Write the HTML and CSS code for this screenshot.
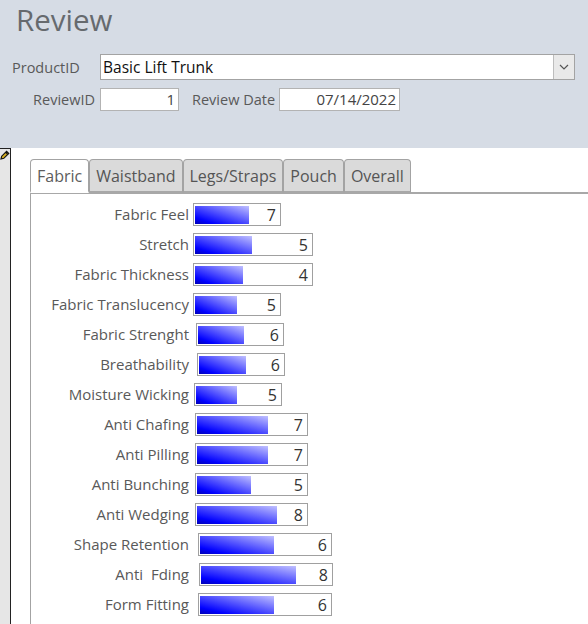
FILE: index.html
```html
<!DOCTYPE html>
<html>
<head>
<meta charset="utf-8">
<title>Review</title>
<link rel="stylesheet" href="styles.css">
</head>
<body>
<div class="form">
  <header class="hdr">
    <h1 class="title">Review</h1>
    <div class="line1">
      <span class="lbl lbl-pid">ProductID</span>
      <div class="combo">
        <span class="combo-text">Basic Lift Trunk</span>
        <span class="combo-btn"><svg width="10" height="6" viewBox="0 0 10 6"><path d="M1 1 L5 5 L9 1" fill="none" stroke="#555" stroke-width="1.2"/></svg></span>
      </div>
    </div>
    <div class="line2">
      <span class="lbl lbl-rid">ReviewID</span>
      <div class="tb tb-id">1</div>
      <span class="lbl lbl-date">Review Date</span>
      <div class="tb tb-date">07/14/2022</div>
    </div>
  </header>
  <div class="detail">
    <div class="selector">
      <svg class="pencil" width="10" height="10" viewBox="0 0 10 10"><path d="M1 9 L1.7 6.2 L6.6 1.3 L8.7 3.4 L3.8 8.3 Z" fill="#d8b020" stroke="#111" stroke-width="1.2"/><path d="M5.6 2.3 L7.7 4.4" stroke="#111" stroke-width="1.2"/></svg>
    </div>
    <div class="tabctl">
      <div class="tabs">
        <div class="tab active">Fabric</div>
        <div class="tab">Waistband</div>
        <div class="tab">Legs/Straps</div>
        <div class="tab">Pouch</div>
        <div class="tab">Overall</div>
      </div>
      <div class="page">
        <div class="row"><span class="rl">Fabric Feel</span><div class="box bx-s"><div class="fill" style="width:54px"></div><span class="val">7</span></div></div>
        <div class="row"><span class="rl">Stretch</span><div class="box bx-l"><div class="fill" style="width:57px"></div><span class="val">5</span></div></div>
        <div class="row"><span class="rl">Fabric Thickness</span><div class="box bx-l"><div class="fill" style="width:48px"></div><span class="val">4</span></div></div>
        <div class="row"><span class="rl">Fabric Translucency</span><div class="box bx-s"><div class="fill" style="width:42px"></div><span class="val">5</span></div></div>
        <div class="row"><span class="rl">Fabric Strenght</span><div class="box bx-s"><div class="fill" style="width:46px"></div><span class="val">6</span></div></div>
        <div class="row"><span class="rl">Breathability</span><div class="box bx-s"><div class="fill" style="width:47px"></div><span class="val">6</span></div></div>
        <div class="row"><span class="rl">Moisture Wicking</span><div class="box bx-s"><div class="fill" style="width:41px"></div><span class="val">5</span></div></div>
        <div class="row"><span class="rl">Anti Chafing</span><div class="box bx-m"><div class="fill" style="width:71px"></div><span class="val">7</span></div></div>
        <div class="row"><span class="rl">Anti Pilling</span><div class="box bx-m"><div class="fill" style="width:71px"></div><span class="val">7</span></div></div>
        <div class="row"><span class="rl">Anti Bunching</span><div class="box bx-m"><div class="fill" style="width:54px"></div><span class="val">5</span></div></div>
        <div class="row"><span class="rl">Anti Wedging</span><div class="box bx-m"><div class="fill" style="width:80px"></div><span class="val">8</span></div></div>
        <div class="row"><span class="rl">Shape Retention</span><div class="box bx-xl"><div class="fill" style="width:74px"></div><span class="val">6</span></div></div>
        <div class="row"><span class="rl">Anti&nbsp; Fding</span><div class="box bx-xl"><div class="fill" style="width:95px"></div><span class="val">8</span></div></div>
        <div class="row"><span class="rl">Form Fitting</span><div class="box bx-xl"><div class="fill" style="width:74px"></div><span class="val">6</span></div></div>
      </div>
    </div>
  </div>
</div>
</body>
</html>
```

FILE: styles.css
```css
* { box-sizing: border-box; }
html, body { margin: 0; padding: 0; }
body {
  width: 588px;
  height: 624px;
  overflow: hidden;
  background: #ffffff;
  font-family: "Open Sans", "Noto Sans", "Liberation Sans", sans-serif;
}
.form { display: flex; flex-direction: column; height: 624px; }

.hdr {
  height: 148px;
  background: #d6dce5;
  padding-top: 2px;
}
.title {
  margin: 0;
  padding-left: 16px;
  font-weight: 400;
  font-size: 29.5px;
  line-height: 36px;
  color: #666a6e;
}
.lbl { font-size: 14.5px; color: #595959; white-space: nowrap; }
.line1 {
  display: flex;
  align-items: center;
  margin-top: 16px;
  height: 26px;
  padding-left: 12px;
}
.lbl-pid { width: 88px; }
.combo {
  width: 475px;
  height: 26px;
  background: #fff;
  border: 1px solid #a3a3a3;
  display: flex;
  align-items: center;
}
.combo-text {
  flex: 1;
  padding-left: 2px;
  font-size: 15.5px;
  color: #111;
}
.combo-btn {
  width: 21px;
  height: 24px;
  background: #e9e9e9;
  border-left: 1px solid #bdbdbd;
  display: flex;
  align-items: center;
  justify-content: center;
}
.line2 {
  display: flex;
  align-items: center;
  margin-top: 8px;
  height: 23px;
}
.lbl-rid { width: 95px; text-align: right; }
.tb {
  height: 23px;
  background: #fff;
  border: 1px solid #b3b3b3;
  text-align: right;
  padding-right: 3px;
  font-size: 15px;
  line-height: 21px;
  color: #444;
}
.tb-id { width: 79px; margin-left: 5px; }
.lbl-date { margin-left: 13px; }
.tb-date { width: 121px; margin-left: 4px; }

.detail { flex: 1; display: flex; }
.selector {
  width: 11px;
  background: #e6e6e6;
  border-top: 1px solid #222;
  border-right: 1.5px solid #222;
  position: relative;
}
.pencil { position: absolute; left: 0; top: 1px; }

.tabctl { flex: 1; margin-left: 19px; display: flex; flex-direction: column; }
.tabs {
  display: flex;
  padding-top: 11px;
  border-bottom: 2px solid #a8a8a8;
  height: 46px;
}
.tab {
  height: 34px;
  margin-bottom: -2px;
  padding: 0 6px;
  font-size: 16px;
  line-height: 32px;
  color: #555;
  background: #dadada;
  border: 1px solid #a3a3a3;
  border-bottom: 2px solid #a8a8a8;
  border-radius: 4px 4px 0 0;
}
.tab.active {
  background: #fff;
  color: #5c5c5c;
  border-bottom: 2px solid #fff;
}
.page {
  flex: 1;
  border-left: 1px solid #a3a3a3;
  padding-top: 5px;
}
.row {
  display: flex;
  align-items: center;
  height: 30px;
}
.rl {
  width: 158px;
  text-align: right;
  font-size: 15px;
  color: #595959;
  white-space: nowrap;
}
.box {
  height: 23px;
  border: 1px solid #a0a0a0;
  background: #fff;
  padding: 2px 1px 1px 1px;
  display: flex;
  align-items: stretch;
}
.bx-s { width: 88px; }
.bx-l { width: 120px; }
.bx-m { width: 113px; }
.bx-xl { width: 134px; }
.fill {
  background: linear-gradient(to top right, #0000b4 0%, #0000ff 18%, #c0c0ff 100%);
}
.val {
  margin-left: auto;
  padding-right: 3px;
  font-size: 16px;
  line-height: 18px;
  color: #333;
}
.row:nth-child(1) .box { margin-left: 4px; }
.row:nth-child(2) .box { margin-left: 4px; }
.row:nth-child(3) .box { margin-left: 4px; }
.row:nth-child(4) .box { margin-left: 4px; }
.row:nth-child(5) .box { margin-left: 7px; }
.row:nth-child(6) .box { margin-left: 8px; }
.row:nth-child(7) .box { margin-left: 5px; }
.row:nth-child(8) .box { margin-left: 6px; }
.row:nth-child(9) .box { margin-left: 6px; }
.row:nth-child(10) .box { margin-left: 6px; }
.row:nth-child(11) .box { margin-left: 6px; }
.row:nth-child(12) .box { margin-left: 9px; }
.row:nth-child(13) .box { margin-left: 10px; }
.row:nth-child(14) .box { margin-left: 9px; }
```
